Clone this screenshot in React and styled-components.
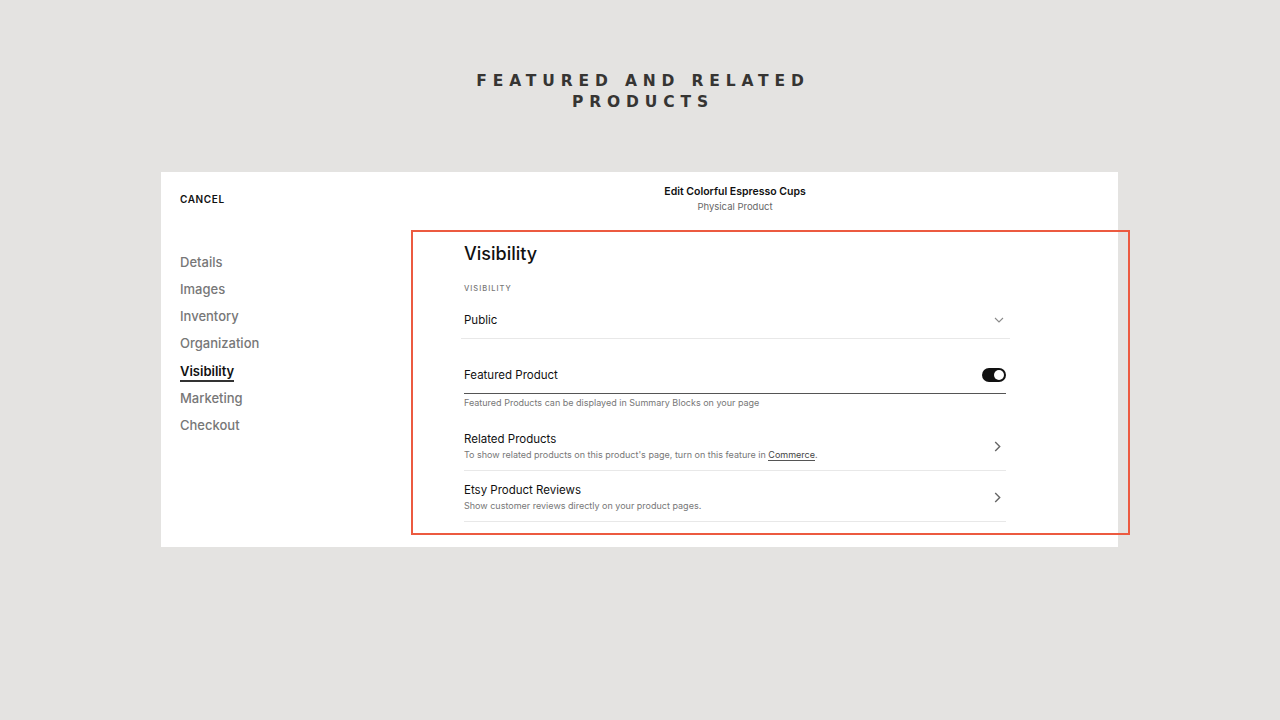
import React from "react";
import styled, { createGlobalStyle } from "styled-components";

const Global = createGlobalStyle`
  html, body { margin: 0; padding: 0; }
  body {
    background: #e4e3e1;
    font-family: Inter, "Liberation Sans", Arial, sans-serif;
    -webkit-font-smoothing: antialiased;
  }
`;

const Page = styled.div`
  width: 1280px;
  height: 720px;
  display: flex;
  flex-direction: column;
  align-items: center;
  box-sizing: border-box;
  padding-top: 71px;
`;

const Title = styled.h1`
  margin: 0;
  width: 440px;
  text-align: center;
  font-family: "DejaVu Sans", "Liberation Sans", sans-serif;
  font-weight: 700;
  font-size: 15.5px;
  line-height: 21px;
  letter-spacing: 5.85px;
  color: #363533;
  padding-left: 6px;
`;

const Panel = styled.div`
  position: relative;
  margin-top: 59px;
  margin-left: -1px;
  width: 957px;
  height: 375px;
  background: #fff;
  box-sizing: border-box;
  display: grid;
  grid-template-columns: 303px 1fr;
  grid-template-rows: 56px 1fr;
`;

const Cancel = styled.div`
  padding: 21px 0 0 19px;
  font-size: 10px;
  font-weight: 600;
  letter-spacing: 0.6px;
  color: #111;
`;

const Header = styled.div`
  display: flex;
  flex-direction: column;
  align-items: center;
  padding-top: 13px;
  padding-right: 112px;
  gap: 3px;
`;

const HeaderTitle = styled.div`
  font-size: 10.5px;
  font-weight: 600;
  color: #111;
`;

const HeaderSub = styled.div`
  font-size: 9.5px;
  color: #666;
`;

const Nav = styled.nav`
  display: flex;
  flex-direction: column;
  gap: 10px;
  padding: 26px 0 0 19px;
`;

const NavItem = styled.div`
  font-size: 13px;
  line-height: 17px;
  color: ${(p) => (p.$active ? "#111" : "#777")};
  font-weight: ${(p) => (p.$active ? 600 : 500)};
  align-self: flex-start;
  border-bottom: 2px solid ${(p) => (p.$active ? "#333" : "transparent")};
  margin-bottom: -2px;
  margin-top: ${(p) => (p.$active ? "1px" : "0")};
`;

const Content = styled.div`
  padding: 15px 0 0 0;
  width: 542px;
`;

const Heading = styled.h2`
  margin: 0;
  font-size: 18px;
  font-weight: 500;
  color: #111;
  line-height: 22px;
`;

const Label = styled.div`
  margin-top: 19px;
  font-size: 7.5px;
  letter-spacing: 1px;
  color: #777;
  font-weight: 500;
`;

const SelectRow = styled.div`
  display: flex;
  align-items: center;
  justify-content: space-between;
  margin-left: -3px;
  width: 549px;
  padding: 20px 6px 11px 3px;
  box-sizing: border-box;
  border-bottom: 1px solid #e8e8e8;
  font-size: 11.5px;
  color: #111;
`;

const ToggleRow = styled.div`
  display: flex;
  align-items: center;
  justify-content: space-between;
  padding: 29px 0 11px;
  border-bottom: 1.5px solid #555;
  font-size: 11.5px;
  color: #111;
`;

const Toggle = styled.div`
  width: 24px;
  height: 14px;
  border-radius: 7px;
  background: #111;
  display: flex;
  align-items: center;
  justify-content: flex-end;
  padding: 0 2px;
  box-sizing: border-box;
  &::after {
    content: "";
    width: 10px;
    height: 10px;
    border-radius: 50%;
    background: #fff;
  }
`;

const Helper = styled.div`
  margin-top: 3px;
  font-size: 9px;
  color: #777;
`;

const LinkRow = styled.div`
  display: flex;
  align-items: center;
  justify-content: space-between;
  padding: ${(p) => p.$pt}px 0 9px;
  border-bottom: 1px solid #e8e8e8;
`;

const RowText = styled.div`
  display: flex;
  flex-direction: column;
  gap: 3px;
`;

const RowTitle = styled.div`
  font-size: 11.5px;
  color: #111;
  line-height: 14px;
`;

const RowDesc = styled.div`
  font-size: 9px;
  color: #777;
  line-height: 12px;
`;

const Under = styled.span`
  color: #444;
  border-bottom: 1px solid #555;
`;

const Highlight = styled.div`
  position: absolute;
  left: 250px;
  top: 58px;
  width: 719px;
  height: 305px;
  border: 2px solid #ec5a40;
  box-sizing: border-box;
  pointer-events: none;
`;

const ChevronDown = () => (
  <svg width="10" height="6" viewBox="0 0 10 6" fill="none">
    <path d="M1 1l4 4 4-4" stroke="#8a8a8a" strokeWidth="1.1" />
  </svg>
);

const ChevronRight = () => (
  <svg width="7" height="11" viewBox="0 0 7 11" fill="none" style={{ marginRight: 5 }}>
    <path d="M1.2 1l4.5 4.5-4.5 4.5" stroke="#666" strokeWidth="1.4" />
  </svg>
);

const navItems = ["Details", "Images", "Inventory", "Organization", "Visibility", "Marketing", "Checkout"];

export default function App() {
  return (
    <>
      <Global />
      <Page>
        <Title>FEATURED AND RELATED PRODUCTS</Title>
        <Panel>
          <Cancel>CANCEL</Cancel>
          <Header>
            <HeaderTitle>Edit Colorful Espresso Cups</HeaderTitle>
            <HeaderSub>Physical Product</HeaderSub>
          </Header>
          <Nav>
            {navItems.map((n) => (
              <NavItem key={n} $active={n === "Visibility"}>
                {n}
              </NavItem>
            ))}
          </Nav>
          <Content>
            <Heading>Visibility</Heading>
            <Label>VISIBILITY</Label>
            <SelectRow>
              <span>Public</span>
              <ChevronDown />
            </SelectRow>
            <ToggleRow>
              <span>Featured Product</span>
              <Toggle />
            </ToggleRow>
            <Helper>Featured Products can be displayed in Summary Blocks on your page</Helper>
            <LinkRow $pt={24}>
              <RowText>
                <RowTitle>Related Products</RowTitle>
                <RowDesc>
                  To show related products on this product's page, turn on this feature in <Under>Commerce</Under>.
                </RowDesc>
              </RowText>
              <ChevronRight />
            </LinkRow>
            <LinkRow $pt={12}>
              <RowText>
                <RowTitle>Etsy Product Reviews</RowTitle>
                <RowDesc>Show customer reviews directly on your product pages.</RowDesc>
              </RowText>
              <ChevronRight />
            </LinkRow>
          </Content>
          <Highlight />
        </Panel>
      </Page>
    </>
  );
}
